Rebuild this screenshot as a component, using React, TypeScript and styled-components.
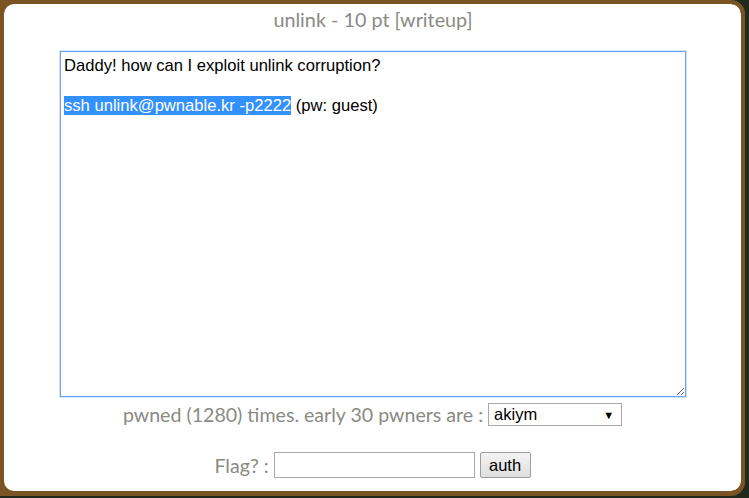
import React from "react";
import styled, { createGlobalStyle } from "styled-components";

const Global = createGlobalStyle`
  html, body { margin: 0; padding: 0; }
  body { background: #1f2a1c; width: 749px; height: 498px; overflow: hidden; }
`;

const Frame = styled.div`
  width: 737px;
  height: 487px;
  border: 4px solid #7a5523;
  border-bottom-width: 5px;
  border-radius: 0 14px 14px 0;
  background: #7a5523;
  overflow: hidden;
`;

const Panel = styled.div`
  height: 100%;
  background: #fff;
  border-radius: 10px;
  display: flex;
  flex-direction: column;
  align-items: center;
  font-family: Lato, "Noto Sans", sans-serif;
  color: #8a8a84;
`;

const Title = styled.div`
  font-size: 19.8px;
  line-height: 28px;
  margin-top: 1px;
  height: 46px;
  padding-left: 1px;
`;

const Box = styled.div`
  box-sizing: border-box;
  width: 626px;
  height: 346px;
  margin-left: 1px;
  border: 1px solid #6d9ff0;
  box-shadow: 0 0 0 0.5px #a9c6f5;
  padding: 4px 3px;
  font-family: "Liberation Sans", Arial, sans-serif;
  font-size: 16.6px;
  line-height: 19px;
  color: #000;
  white-space: pre-wrap;
  resize: both;
  overflow: auto;
  text-align: left;
`;

const Line = styled.div`
  height: 20px;
`;

const Sel = styled.span`
  background: #3390ff;
  color: #fff;
`;

const Row = styled.div<{ $top: number; $h: number }>`
  display: flex;
  align-items: center;
  height: ${(p) => p.$h}px;
  margin-top: ${(p) => p.$top}px;
  font-size: 19.6px;
  gap: 5px;
`;

const Select = styled.div`
  box-sizing: border-box;
  width: 134px;
  height: 23px;
  border: 1px solid #a9a9a9;
  display: flex;
  align-items: center;
  justify-content: space-between;
  padding: 0 7px 0 5px;
  font-family: "Liberation Sans", Arial, sans-serif;
  font-size: 16.5px;
  color: #000;
`;

const Arrow = styled.span`
  font-size: 11px;
`;

const Input = styled.div`
  box-sizing: border-box;
  width: 201px;
  height: 26px;
  border: 1px solid #a9a9a9;
`;

const Button = styled.div`
  box-sizing: border-box;
  width: 51px;
  height: 26px;
  border: 1px solid #9e9e9e;
  border-radius: 2px;
  background: linear-gradient(#f3f3f3, #dedede);
  display: flex;
  align-items: center;
  justify-content: center;
  font-family: "Liberation Sans", Arial, sans-serif;
  font-size: 16.5px;
  color: #000;
`;

export default function App() {
  return (
    <>
      <Global />
      <Frame>
        <Panel>
          <Title>unlink - 10 pt [writeup]</Title>
          <Box>
            <Line>Daddy! how can I exploit unlink corruption?</Line>
            <Line></Line>
            <Line>
              <Sel>ssh unlink@pwnable.kr -p2222</Sel> (pw: guest)
            </Line>
          </Box>
          <Row $top={5} $h={25}>
            pwned (1280) times. early 30 pwners are :
            <Select>
              <span>akiym</span>
              <Arrow>▼</Arrow>
            </Select>
          </Row>
          <Row $top={24} $h={28}>
            Flag? :
            <Input />
            <Button>auth</Button>
          </Row>
        </Panel>
      </Frame>
    </>
  );
}
